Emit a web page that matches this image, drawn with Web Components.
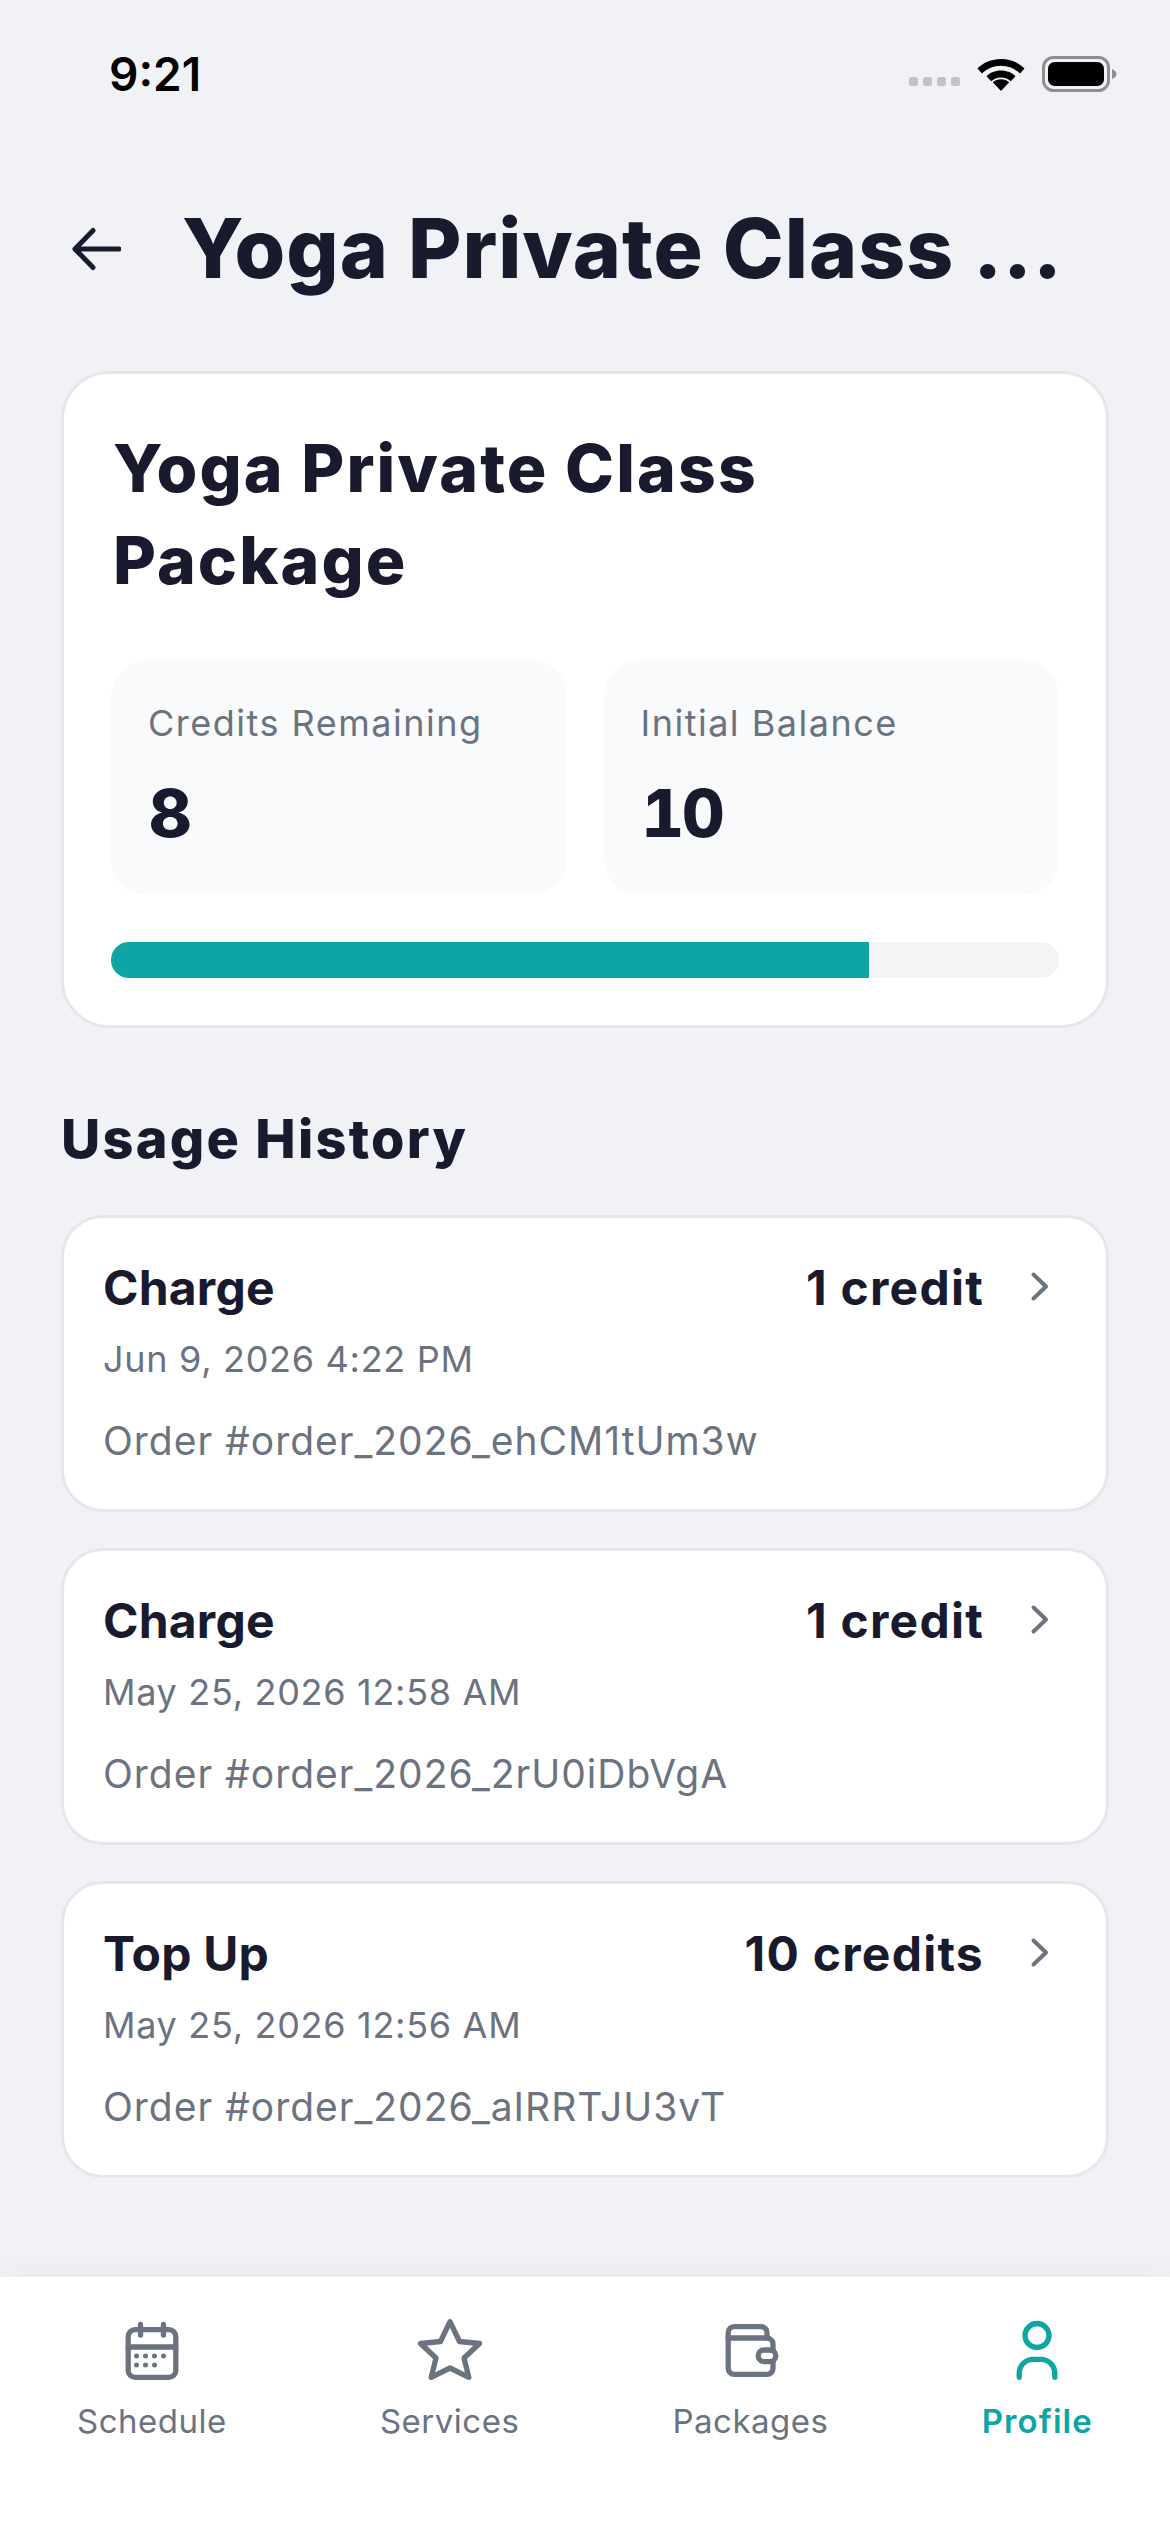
<!DOCTYPE html>
<html>
<head>
<meta charset="utf-8">
<style>
  html, body { margin: 0; padding: 0; }
  body { background: #f0f2f6; font-family: Inter, "Liberation Sans", sans-serif; color: #1a1a2e; }
  #app { width: 1170px; height: 2532px; display: flex; flex-direction: column; overflow: hidden; }
  #main { flex: 1; display: flex; flex-direction: column; padding: 0 61px; }
</style>
</head>
<body>
<div id="app">
  <status-bar time="9:21"></status-bar>
  <page-header>Yoga Private Class ...</page-header>
  <div id="main">
    <package-card title="Yoga Private Class Package" remaining="8" initial="10"></package-card>
    <section-title>Usage History</section-title>
    <history-item kind="Charge" amount="1 credit" date="Jun 9, 2026 4:22 PM" order="Order #order_2026_ehCM1tUm3w"></history-item>
    <history-item kind="Charge" amount="1 credit" date="May 25, 2026 12:58 AM" order="Order #order_2026_2rU0iDbVgA"></history-item>
    <history-item kind="Top Up" amount="10 credits" date="May 25, 2026 12:56 AM" order="Order #order_2026_aIRRTJU3vT"></history-item>
  </div>
  <tab-bar>
    <tab-item label="Schedule" icon="calendar"></tab-item>
    <tab-item label="Services" icon="star"></tab-item>
    <tab-item label="Packages" icon="wallet"></tab-item>
    <tab-item label="Profile" icon="person" active></tab-item>
  </tab-bar>
</div>

<script>
const ICONS = {
  calendar: `<rect x="13.2" y="13.6" width="47.600" height="47.800" rx="7"/><path d="M13.2 31h47.600M25.500 8.500V19M48.500 8.500V19"/>
    <g fill="currentColor" stroke="none"><circle cx="21.500" cy="40" r="2.500"/><circle cx="30.500" cy="40" r="2.500"/><circle cx="39.500" cy="40" r="2.500"/><circle cx="48.500" cy="40" r="2.500"/><circle cx="21.500" cy="49" r="2.500"/><circle cx="30.500" cy="49" r="2.500"/><circle cx="39.500" cy="49" r="2.500"/></g>`,
  star: `<path d="M37 5.700L46.500 25.500L66.500 27.500L51 42L55.800 61.300L37 52L18.200 61.300L23 42L7.500 27.500L27.500 25.500Z"/>`,
  wallet: `<path d="M53 22V16.700a6 6 0 0 0-6-6H20.200a6 6 0 0 0-6 6V52.300a6 6 0 0 0 6 6H53a6 6 0 0 0 6-6V45.600"/><path d="M14.200 22H53a6 6 0 0 1 6 6V34"/><rect x="44.200" y="34" width="17.600" height="11.600" rx="5.800"/>`,
  person: `<circle cx="37" cy="19.500" r="12"/><path d="M19.200 61.300v-4a14 14 0 0 1 14-14h7.600a14 14 0 0 1 14 14v4"/>`
};

const statusBar = document.createElement('template');
statusBar.innerHTML = `
  <style>
    :host { display: flex; justify-content: space-between; align-items: center; height: 148px; padding: 0 52px 0 109px; box-sizing: border-box; }
    .time { font-size: 46px; font-weight: 600; color: #000; }
    .right { display: flex; align-items: center; gap: 16px; }
    .dots { display: flex; gap: 5px; margin-top: 14px; }
    .dots i { width: 9px; height: 9px; border-radius: 2.5px; background: #c2c3c7; }
    svg { display: block; }
  </style>
  <span class="time"></span>
  <div class="right">
    <div class="dots"><i></i><i></i><i></i><i></i></div>
    <svg width="50" height="36" viewBox="0 0 50 36"><path d="M25 3C15.500 3 7.500 6.500 1.500 12.500l4.500 5C11 12.700 17.500 9.800 25 9.800s14 2.900 19 7.700l4.500-5C42.500 6.500 34.500 3 25 3z"/><path d="M25 14.500c-6 0-11 2.200-14.500 5.700l4.700 5c2.500-2.300 5.900-3.800 9.800-3.800s7.300 1.500 9.800 3.800l4.700-5C36 16.700 31 14.500 25 14.500z"/><path d="M25 35l-8.200-8.700c2.200-1.900 5-3 8.200-3s6 1.100 8.200 3z"/></svg>
    <svg width="76" height="36" viewBox="0 0 76 36"><rect x="1.500" y="1.500" width="65" height="33" rx="10" fill="none" stroke="#8e8f92" stroke-width="3"/><rect x="6" y="6" width="56" height="24" rx="6.500"/><path d="M70 13c3 1 4.500 3 4.500 5s-1.500 4-4.500 5z" fill="#8e8f92"/></svg>
  </div>
`;
class StatusBar extends HTMLElement {
  constructor () {
    super();
    this.attachShadow({ mode: 'open' });
    this.shadowRoot.appendChild(statusBar.content.cloneNode(true));
    this.shadowRoot.querySelector('.time').textContent = this.getAttribute('time');
  }
}
customElements.define('status-bar', StatusBar);

const pageHeader = document.createElement('template');
pageHeader.innerHTML = `
  <style>
    :host { display: flex; align-items: center; height: 223px; padding: 0 0 22px 69px; box-sizing: border-box; }
    svg { display: block; flex: none; margin-right: 61px; }
    h1 { margin: 0; font-size: 82px; font-weight: 800; line-height: 1; letter-spacing: 1px; color: #1a1a2e; white-space: nowrap; }
  </style>
  <svg width="52" height="44" viewBox="0 0 52 44" fill="none" stroke="#1a1a2e" stroke-width="5" stroke-linecap="round" stroke-linejoin="round"><path d="M50 22H6M24 3.500L6 22l18 18.500"/></svg>
  <h1><slot></slot></h1>
`;
class PageHeader extends HTMLElement {
  constructor () {
    super();
    this.attachShadow({ mode: 'open' });
    this.shadowRoot.appendChild(pageHeader.content.cloneNode(true));
  }
}
customElements.define('page-header', PageHeader);

const packageCard = document.createElement('template');
packageCard.innerHTML = `
  <style>
    :host { display: block; background: #fff; border: 3px solid #e5e7eb; border-radius: 48px; padding: 48px 47px 0; box-sizing: border-box; height: 657px; }
    h2 { margin: 0 0 54px 2px; font-size: 66px; font-weight: 800; line-height: 92px; letter-spacing: 2.1px; color: #1a1a2e; width: 760px; }
    .stats { display: grid; grid-template-columns: 1fr 1fr; gap: 37px; }
    .stat { background: #f9fafb; border-radius: 36px; height: 235px; padding: 38px 36px 0 37px; box-sizing: border-box; }
    .label { font-size: 36px; line-height: 50px; letter-spacing: 1.5px; color: #6b7280; }
    .value { font-size: 66px; font-weight: 800; line-height: 80px; letter-spacing: -2px; font-feature-settings: "tnum"; color: #1a1a2e; margin: 25px 0 0 1px; }
    .track { margin-top: 47px; height: 36px; border-radius: 18px; background: #f3f4f6; overflow: hidden; }
    .fill { height: 100%; width: 80%; background: #0ea5a4; }
  </style>
  <h2></h2>
  <div class="stats">
    <div class="stat"><div class="label">Credits Remaining</div><div class="value remaining"></div></div>
    <div class="stat"><div class="label">Initial Balance</div><div class="value initial"></div></div>
  </div>
  <div class="track"><div class="fill"></div></div>
`;
class PackageCard extends HTMLElement {
  constructor () {
    super();
    this.attachShadow({ mode: 'open' });
    this.shadowRoot.appendChild(packageCard.content.cloneNode(true));
    this.shadowRoot.querySelector('h2').textContent = this.getAttribute('title');
    this.shadowRoot.querySelector('.remaining').textContent = this.getAttribute('remaining');
    this.shadowRoot.querySelector('.initial').textContent = this.getAttribute('initial');
  }
}
customElements.define('package-card', PackageCard);

const sectionTitle = document.createElement('template');
sectionTitle.innerHTML = `
  <style>
    :host { display: block; margin: 78px 0 43px; font-size: 54px; font-weight: 800; line-height: 66px; letter-spacing: 2.25px; color: #1a1a2e; }
  </style>
  <slot></slot>
`;
class SectionTitle extends HTMLElement {
  constructor () {
    super();
    this.attachShadow({ mode: 'open' });
    this.shadowRoot.appendChild(sectionTitle.content.cloneNode(true));
  }
}
customElements.define('section-title', SectionTitle);

const historyItem = document.createElement('template');
historyItem.innerHTML = `
  <style>
    :host { display: block; background: #fff; border: 3px solid #e5e7eb; border-radius: 42px; height: 297px; margin-bottom: 36px; padding: 41px 55px 0 39px; box-sizing: border-box; }
    .top { display: flex; align-items: center; height: 58px; font-size: 48px; font-weight: 700; line-height: 58px; color: #1a1a2e; }
    .kind { flex: 1; letter-spacing: 0.2px; }
    .amount { letter-spacing: 1.25px; }
    svg { display: block; margin-left: 45px; margin-top: -2px; }
    .date { margin-top: 15px; font-size: 36px; line-height: 54px; letter-spacing: 0.7px; color: #6b7280; }
    .order { margin-top: 28px; font-size: 39px; line-height: 54px; letter-spacing: 1px; color: #6b7280; }
  </style>
  <div class="top"><span class="kind"></span><span class="amount"></span>
    <svg width="22" height="32" viewBox="0 0 22 32" fill="none" stroke="#6b7280" stroke-width="4" stroke-linecap="round" stroke-linejoin="round"><path d="M4.500 3.500L17 15.500L4.500 27.500"/></svg>
  </div>
  <div class="date"></div>
  <div class="order"></div>
`;
class HistoryItem extends HTMLElement {
  constructor () {
    super();
    this.attachShadow({ mode: 'open' });
    this.shadowRoot.appendChild(historyItem.content.cloneNode(true));
    for (const key of ['kind', 'amount', 'date', 'order']) {
      this.shadowRoot.querySelector('.' + key).textContent = this.getAttribute(key);
    }
  }
}
customElements.define('history-item', HistoryItem);

const tabBar = document.createElement('template');
tabBar.innerHTML = `
  <style>
    :host { display: flex; justify-content: space-between; height: 255px; background: #fff; padding: 0 77px; box-sizing: border-box; box-shadow: 0 -4px 30px rgba(0,0,0,0.04); }
  </style>
  <slot></slot>
`;
class TabBar extends HTMLElement {
  constructor () {
    super();
    this.attachShadow({ mode: 'open' });
    this.shadowRoot.appendChild(tabBar.content.cloneNode(true));
  }
}
customElements.define('tab-bar', TabBar);

const tabItem = document.createElement('template');
tabItem.innerHTML = `
  <style>
    :host { display: flex; flex-direction: column; align-items: center; padding-top: 39px; color: #6b7280; }
    :host([active]) { color: #0ea5a4; }
    svg { display: block; }
    .label { margin-top: 8px; font-size: 33px; line-height: 46px; letter-spacing: 0.5px; }
    :host([active]) .label { font-weight: 600; letter-spacing: 1.1px; }
  </style>
  <svg width="74" height="74" viewBox="0 0 74 74" fill="none" stroke="currentColor" stroke-width="5.300" stroke-linecap="round" stroke-linejoin="round"></svg>
  <span class="label"></span>
`;
class TabItem extends HTMLElement {
  constructor () {
    super();
    this.attachShadow({ mode: 'open' });
    this.shadowRoot.appendChild(tabItem.content.cloneNode(true));
    this.shadowRoot.querySelector('svg').innerHTML = ICONS[this.getAttribute('icon')];
    this.shadowRoot.querySelector('.label').textContent = this.getAttribute('label');
  }
}
customElements.define('tab-item', TabItem);
</script>
</body>
</html>
